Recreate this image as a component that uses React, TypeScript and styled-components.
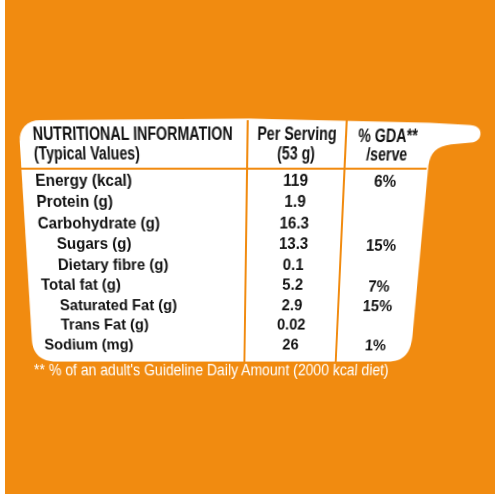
import React from "react";
import styled, { createGlobalStyle } from "styled-components";

const ORANGE = "#F18B10";
const INK = "#111111";

const GlobalStyle = createGlobalStyle`
  html, body { margin: 0; padding: 0; background: #fff; }
  body { font-family: "Liberation Sans", Arial, sans-serif; }
`;

const Page = styled.div`
  width: 500px;
  height: 500px;
  box-sizing: border-box;
  padding: 0 5px 6px 5px;
  background: #fff;
`;

const Panel = styled.div`
  height: 100%;
  box-sizing: border-box;
  background: ${ORANGE};
  padding: 120.8px 0 0 21.4px;
  overflow: hidden;
`;

/* the label is printed on a package seen slightly from above */
const Plane = styled.div`
  width: 395px;
  transform-origin: 178.6px 125px;
  transform: perspective(800px) rotateX(-15deg);
`;

const Card = styled.div`
  position: relative;
  height: 250px;
`;

const Shape = styled.svg`
  position: absolute;
  left: 0;
  top: 0;
  overflow: visible;
`;

const Table = styled.div`
  position: relative;
  height: 100%;
  display: grid;
  grid-template-columns: 221px 95px 1fr;
  grid-template-rows: 47.5px repeat(9, 21.56px) 1fr;
`;

const Cell = styled.div<{ $col: number; $head?: boolean; $indent?: boolean }>`
  box-sizing: border-box;
  display: flex;
  flex-direction: column;
  align-items: ${(p) => (p.$col === 1 ? "flex-start" : "center")};
  border-right: ${(p) => (p.$col < 3 ? `2px solid ${ORANGE}` : "none")};
  border-bottom: ${(p) => (p.$head ? `2px solid ${ORANGE}` : "none")};
  padding-left: ${(p) => (p.$col === 1 ? (p.$indent ? "31px" : "13px") : "0")};
  padding-top: ${(p) => (p.$head ? (p.$col === 3 ? "5.6px" : "4.2px") : "0")};
  color: ${INK};
`;

const Title = styled.span`
  display: inline-block;
  white-space: nowrap;
  font: 700 19px/18.4px "Liberation Sans", Arial, sans-serif;
  transform: scaleX(0.723);
  transform-origin: left center;
`;

const HeadLine = styled.span<{ $left?: boolean }>`
  display: inline-block;
  white-space: nowrap;
  font: 700 17.5px/18.4px "Liberation Sans", Arial, sans-serif;
  transform: scaleX(0.785);
  transform-origin: ${(p) => (p.$left ? "left center" : "center center")};
`;

const Label = styled.span`
  display: inline-block;
  white-space: nowrap;
  font: 700 17px/21.56px "Liberation Sans", Arial, sans-serif;
  transform: scaleX(0.885);
  transform-origin: left center;
`;

const Value = styled.span<{ $drop?: boolean }>`
  display: inline-block;
  white-space: nowrap;
  font: 700 17px/21.56px "Liberation Sans", Arial, sans-serif;
  padding-top: ${(p) => (p.$drop ? "1.5px" : "0")};
  transform: scaleX(0.885);
  transform-origin: center center;
`;

const Foot = styled.p`
  margin: 0;
  padding-left: 1px;
  color: #fff;
  white-space: nowrap;
  font: 400 18px/18.4px "Liberation Sans", Arial, sans-serif;
  transform: scaleX(0.81);
  transform-origin: left center;
`;

type Row = { label: string; sub?: boolean; serving: string; gda?: string };

const rows: Row[] = [
  { label: "Energy (kcal)", serving: "119", gda: "6%" },
  { label: "Protein (g)", serving: "1.9" },
  { label: "Carbohydrate (g)", serving: "16.3" },
  { label: "Sugars (g)", sub: true, serving: "13.3", gda: "15%" },
  { label: "Dietary fibre (g)", sub: true, serving: "0.1" },
  { label: "Total fat (g)", serving: "5.2", gda: "7%" },
  { label: "Saturated Fat (g)", sub: true, serving: "2.9", gda: "15%" },
  { label: "Trans Fat (g)", sub: true, serving: "0.02" },
  { label: "Sodium (mg)", serving: "26", gda: "1%" },
];

const CardShape = () => (
  <Shape width="395" height="250" viewBox="0 0 395 250">
    <path
      fill="#fff"
      d="M 0 21 C 0 8 8 0 21 0 L 222 -1.5 L 395 2.5 L 431 4.6 C 441 4.8 444.5 8.5 444.5 13.4 C 444.5 18.5 441 21.6 433 21.7 L 417 23.2 C 403 25 397.5 31 396.5 44 L 393 218 C 393 240 386 249.5 369 249.5 L 24 249.5 C 9 249.5 0.5 241 0.3 226 Z"
    />
  </Shape>
);

export default function App() {
  return (
    <>
      <GlobalStyle />
      <Page>
        <Panel>
          <Plane>
            <Card>
              <CardShape />
              <Table>
                <Cell $col={1} $head>
                  <Title>NUTRITIONAL INFORMATION</Title>
                  <HeadLine $left>(Typical Values)</HeadLine>
                </Cell>
                <Cell $col={2} $head>
                  <HeadLine>Per Serving</HeadLine>
                  <HeadLine>(53 g)</HeadLine>
                </Cell>
                <Cell $col={3} $head>
                  <HeadLine>% GDA**</HeadLine>
                  <HeadLine>/serve</HeadLine>
                </Cell>
                {rows.map((r) => (
                  <React.Fragment key={r.label}>
                    <Cell $col={1} $indent={r.sub}>
                      <Label>{r.label}</Label>
                    </Cell>
                    <Cell $col={2}>
                      <Value>{r.serving}</Value>
                    </Cell>
                    <Cell $col={3}>
                      {r.gda ? <Value $drop>{r.gda}</Value> : null}
                    </Cell>
                  </React.Fragment>
                ))}
                <Cell $col={1} />
                <Cell $col={2} />
                <Cell $col={3} />
              </Table>
            </Card>
            <Foot>** % of an adult's Guideline Daily Amount (2000 kcal diet)</Foot>
          </Plane>
        </Panel>
      </Page>
    </>
  );
}
